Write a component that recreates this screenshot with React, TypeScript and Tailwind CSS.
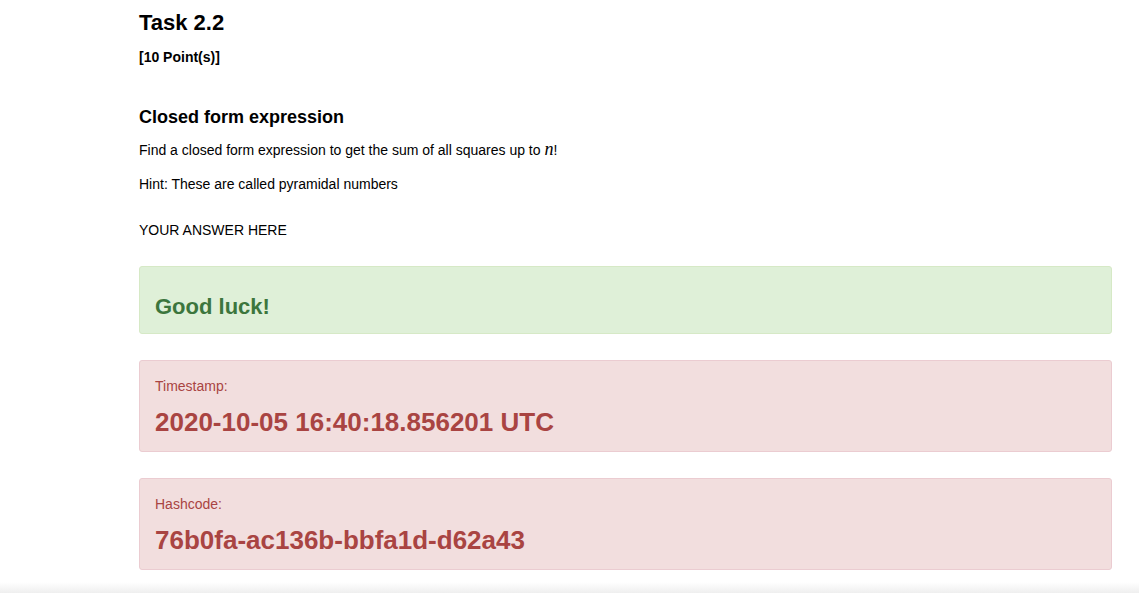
const sans = { fontFamily: '"Liberation Sans", Arial, Helvetica, sans-serif' }

function Alert({ tone, children }: { tone: 'success' | 'danger'; children: React.ReactNode }) {
  const cls =
    tone === 'success'
      ? 'border-[#d6e9c6] bg-[#dff0d8] text-[#3c763d]'
      : 'border-[#ebccd1] bg-[#f2dede] text-[#a94442]'
  return <div className={`rounded-[3px] border p-[15px] ${cls}`}>{children}</div>
}

export default function App() {
  return (
    <div className="min-h-[593px] bg-white text-black" style={sans}>
      <div className="ml-[139px] w-[973px] pt-[11px]">
        <h2 className="text-[22px] font-bold leading-[24px]">Task 2.2</h2>
        <p className="mt-[12px] text-[14px] font-bold leading-[20px]">[10 Point(s)]</p>

        <h3 className="mt-[40px] text-[18px] font-bold leading-[20px]">Closed form expression</h3>
        <p className="mt-[13px] text-[14px] leading-[20px]">
          Find a closed form expression to get the sum of all squares up to{' '}
          <span
            className="text-[18px] italic leading-none"
            style={{ fontFamily: '"Liberation Serif", "DejaVu Serif", serif' }}
          >
            n
          </span>
          !
        </p>
        <p className="mt-[14px] text-[14px] leading-[20px]">Hint: These are called pyramidal numbers</p>
        <p className="mt-[26px] text-[14px] leading-[20px]">YOUR ANSWER HERE</p>

        <div className="mt-[26px] flex flex-col gap-[26px]">
          <Alert tone="success">
            <h3 className="pt-[13px] text-[22px] font-bold leading-[23px]">Good luck!</h3>
          </Alert>
          <Alert tone="danger">
            <p className="mb-[13px] text-[14px] leading-[20px]">Timestamp:</p>
            <h2 className="text-[26px] font-bold leading-[27px]">2020-10-05 16:40:18.856201 UTC</h2>
          </Alert>
          <Alert tone="danger">
            <p className="mb-[13px] text-[14px] leading-[20px]">Hashcode:</p>
            <h2 className="text-[26px] font-bold leading-[27px]">76b0fa-ac136b-bbfa1d-d62a43</h2>
          </Alert>
        </div>
      </div>
      <div className="mt-[12px] h-[12px] bg-gradient-to-b from-white to-[#ededed]" />
    </div>
  )
}
